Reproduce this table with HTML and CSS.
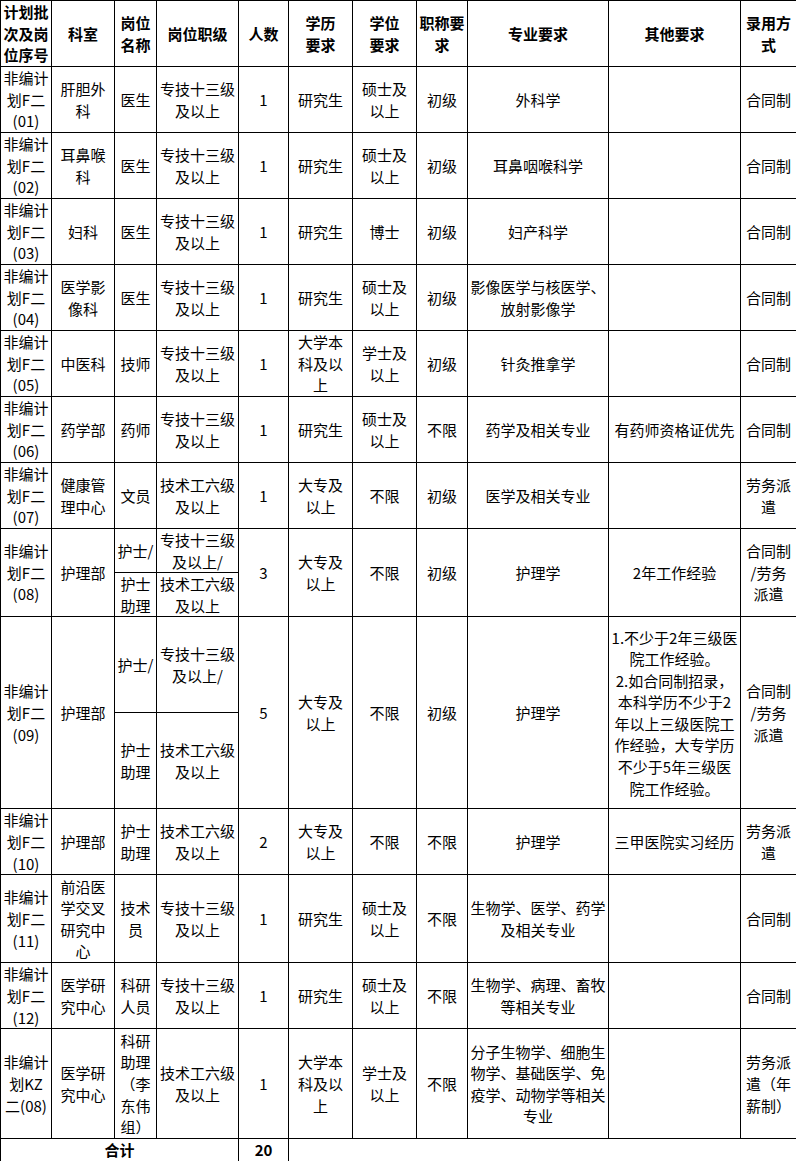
FILE: index.html
```html
<!DOCTYPE html>
<html lang="zh-CN">
<head>
<meta charset="utf-8">
<title>招聘岗位表</title>
<link rel="stylesheet" href="styles.css">
</head>
<body>
<table class="jobs">
  <colgroup>
    <col class="c1"><col class="c2"><col class="c3"><col class="c4"><col class="c5"><col class="c6"><col class="c7"><col class="c8"><col class="c9"><col class="c10"><col class="c11">
  </colgroup>
  <thead>
    <tr class="h66">
      <th>计划批次及岗位序号</th><th>科室</th><th>岗位名称</th><th>岗位职级</th><th>人数</th><th>学历<br>要求</th><th>学位<br>要求</th><th>职称要求</th><th>专业要求</th><th>其他要求</th><th>录用方式</th>
    </tr>
  </thead>
  <tbody>
    <tr class="h66">
      <td>非编计划F二(01)</td><td>肝胆外科</td><td>医生</td><td>专技十三级及以上</td><td>1</td><td>研究生</td><td>硕士及以上</td><td>初级</td><td>外科学</td><td></td><td>合同制</td>
    </tr>
    <tr class="h66">
      <td>非编计划F二(02)</td><td>耳鼻喉科</td><td>医生</td><td>专技十三级及以上</td><td>1</td><td>研究生</td><td>硕士及以上</td><td>初级</td><td>耳鼻咽喉科学</td><td></td><td>合同制</td>
    </tr>
    <tr class="h66">
      <td>非编计划F二(03)</td><td>妇科</td><td>医生</td><td>专技十三级及以上</td><td>1</td><td>研究生</td><td>博士</td><td>初级</td><td>妇产科学</td><td></td><td>合同制</td>
    </tr>
    <tr class="h66">
      <td>非编计划F二(04)</td><td>医学影像科</td><td>医生</td><td>专技十三级及以上</td><td>1</td><td>研究生</td><td>硕士及以上</td><td>初级</td><td>影像医学与核医学、放射影像学</td><td></td><td>合同制</td>
    </tr>
    <tr class="h66">
      <td>非编计划F二(05)</td><td>中医科</td><td>技师</td><td>专技十三级及以上</td><td>1</td><td>大学本科及以上</td><td>学士及以上</td><td>初级</td><td>针灸推拿学</td><td></td><td>合同制</td>
    </tr>
    <tr class="h66">
      <td>非编计划F二(06)</td><td>药学部</td><td>药师</td><td>专技十三级及以上</td><td>1</td><td>研究生</td><td>硕士及以上</td><td>不限</td><td>药学及相关专业</td><td>有药师资格证优先</td><td>合同制</td>
    </tr>
    <tr class="h66">
      <td>非编计划F二(07)</td><td>健康管理中心</td><td>文员</td><td>技术工六级及以上</td><td>1</td><td>大专及以上</td><td>不限</td><td>初级</td><td>医学及相关专业</td><td></td><td>劳务派遣</td>
    </tr>
    <tr class="h44">
      <td rowspan="2">非编计划F二(08)</td><td rowspan="2">护理部</td><td>护士/</td><td>专技十三级及以上/</td><td rowspan="2">3</td><td rowspan="2">大专及以上</td><td rowspan="2">不限</td><td rowspan="2">初级</td><td rowspan="2">护理学</td><td rowspan="2">2年工作经验</td><td rowspan="2">合同制<br>/劳务<br>派遣</td>
    </tr>
    <tr class="h44">
      <td>护士助理</td><td>技术工六级及以上</td>
    </tr>
    <tr class="h96">
      <td rowspan="2">非编计划F二(09)</td><td rowspan="2">护理部</td><td>护士/</td><td>专技十三级及以上/</td><td rowspan="2">5</td><td rowspan="2">大专及以上</td><td rowspan="2">不限</td><td rowspan="2">初级</td><td rowspan="2">护理学</td><td rowspan="2">1.不少于2年三级医院工作经验。<br>2.如合同制招录，本科学历不少于2年以上三级医院工作经验，大专学历不少于5年三级医院工作经验。</td><td rowspan="2">合同制<br>/劳务<br>派遣</td>
    </tr>
    <tr class="h96">
      <td>护士助理</td><td>技术工六级及以上</td>
    </tr>
    <tr class="h66">
      <td>非编计划F二(10)</td><td>护理部</td><td>护士助理</td><td>技术工六级及以上</td><td>2</td><td>大专及以上</td><td>不限</td><td>不限</td><td>护理学</td><td>三甲医院实习经历</td><td>劳务派遣</td>
    </tr>
    <tr class="h88">
      <td>非编计划F二(11)</td><td>前沿医学交叉研究中心</td><td>技术员</td><td>专技十三级及以上</td><td>1</td><td>研究生</td><td>硕士及以上</td><td>不限</td><td>生物学、医学、药学及相关专业</td><td></td><td>合同制</td>
    </tr>
    <tr class="h66">
      <td>非编计划F二(12)</td><td>医学研究中心</td><td>科研人员</td><td>专技十三级及以上</td><td>1</td><td>研究生</td><td>硕士及以上</td><td>不限</td><td>生物学、病理、畜牧等相关专业</td><td></td><td>合同制</td>
    </tr>
    <tr class="h110">
      <td>非编计划KZ二(08)</td><td>医学研究中心</td><td>科研助理（李东伟组）</td><td>技术工六级及以上</td><td>1</td><td>大学本科及以上</td><td>学士及以上</td><td>不限</td><td>分子生物学、细胞生物学、基础医学、免疫学、动物学等相关专业</td><td></td><td>劳务派遣（年薪制）</td>
    </tr>
    <tr class="h22 total">
      <td colspan="4">合计</td><td>20</td><td colspan="6"></td>
    </tr>
  </tbody>
</table>
</body>
</html>
```

FILE: styles.css
```css
html, body {
  margin: 0;
  padding: 0;
  background: #fff;
}

body {
  font-family: "Noto Sans CJK SC", "Noto Sans", sans-serif;
  font-size: 15px;
  line-height: 21.6px;
  color: #000;
}

.jobs {
  border-collapse: collapse;
  table-layout: fixed;
  width: 796px;
}

.c1 { width: 51px; }
.c2 { width: 63px; }
.c3 { width: 42px; }
.c4 { width: 82px; }
.c5 { width: 50px; }
.c6 { width: 64px; }
.c7 { width: 64px; }
.c8 { width: 51px; }
.c9 { width: 141px; }
.c10 { width: 132px; }
.c11 { width: 56px; }

.jobs th,
.jobs td {
  border: 1px solid #000;
  padding: 0 2px;
  text-align: center;
  vertical-align: middle;
  word-break: break-all;
  font-weight: normal;
}

.jobs th {
  font-weight: bold;
}

.total td {
  font-weight: bold;
}

.h22 { height: 22px; }
.h44 { height: 44px; }
.h66 { height: 66px; }
.h88 { height: 88px; }
.h96 { height: 96px; }
.h110 { height: 110px; }
```
